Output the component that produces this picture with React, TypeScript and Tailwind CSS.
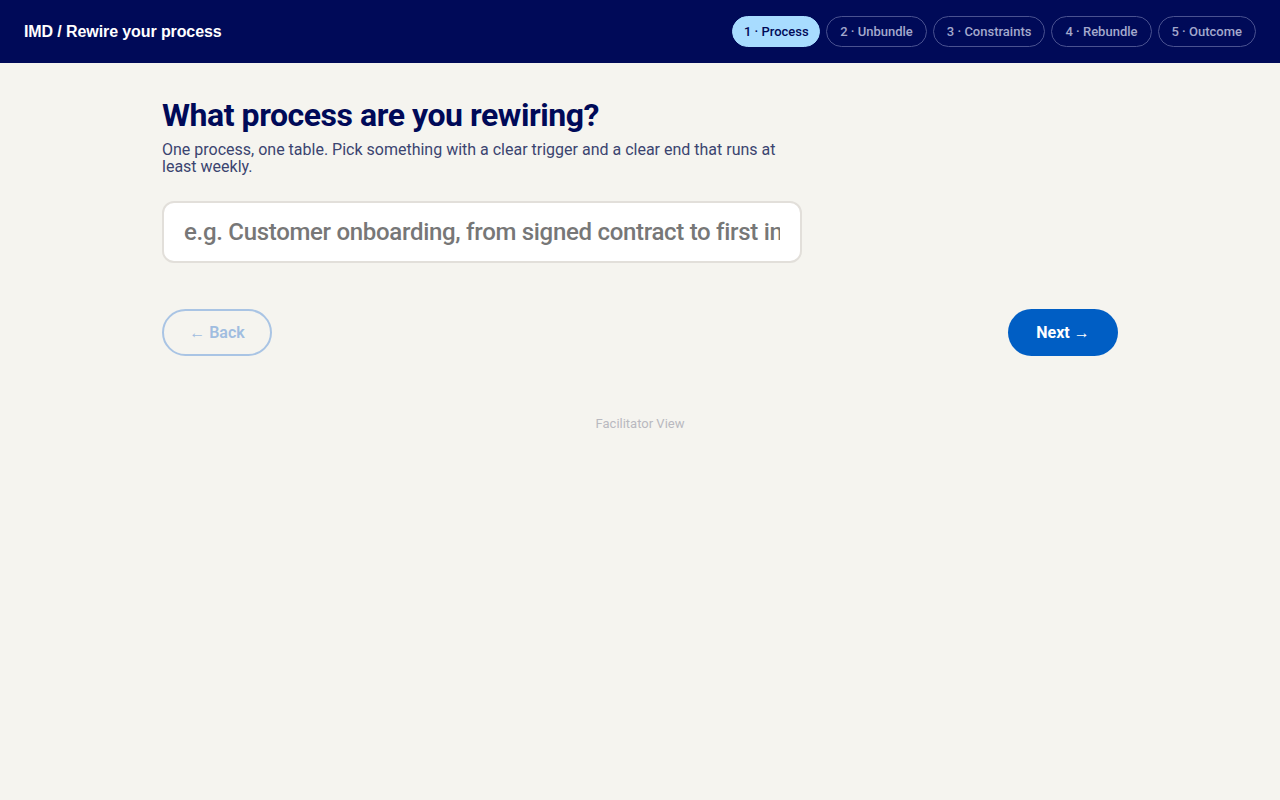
const steps = ["1 · Process", "2 · Unbundle", "3 · Constraints", "4 · Rebundle", "5 · Outcome"]

const App = () => {
  const active = 0

  return (
    <div className="min-h-screen bg-[#f5f4ef] font-['Roboto',sans-serif]">
      <header className="h-[63px] bg-[#000a58] flex items-center justify-between pl-6 pr-6">
        <h1 className="text-white text-base font-bold font-['Liberation_Sans',sans-serif] tracking-[-0.1px]">
          IMD / Rewire your process
        </h1>
        <nav className="flex items-center gap-1.5">
          {steps.map((s, i) => (
            <span
              key={s}
              className={
                i === active
                  ? "h-[31px] px-[10.5px] flex items-center rounded-full border border-[#a8dcff] bg-[#a8dcff] text-[#000a58] text-[13px] font-medium"
                  : "h-[31px] px-[13px] flex items-center rounded-full border border-[#4a5290] text-[#a3a8cc] text-[13px] font-medium"
              }
            >
              {s}
            </span>
          ))}
        </nav>
      </header>

      <main className="max-w-[956px] mx-auto pt-[32px]">
        <h2 className="text-[32px] leading-[40px] font-bold text-[#000a58] tracking-[-0.45px]">
          What process are you rewiring?
        </h2>
        <p className="mt-[6px] max-w-[640px] text-base leading-[17px] text-[#3b4470]">
          One process, one table. Pick something with a clear trigger and a clear end that runs at least weekly.
        </p>
        <input
          type="text"
          placeholder="e.g. Customer onboarding, from signed contract to first invoice"
          className="mt-[26px] w-[640px] h-[62px] rounded-xl border-2 border-[#e2dfda] bg-white px-5 text-[24px] font-medium text-[#222] placeholder:text-[#777777] outline-none tracking-[-0.3px]"
        />

        <div className="mt-[46px] flex items-center justify-between">
          <button className="w-[110px] h-[47px] rounded-full border-2 border-[#a9c4e4] text-[#a0bde0] text-base font-semibold">
            ← Back
          </button>
          <button className="w-[110px] h-[47px] rounded-full bg-[#005ec4] text-white text-base font-bold">
            Next →
          </button>
        </div>

        <p className="mt-[58px] text-center text-[13px] text-[#b9b9c0]">Facilitator View</p>
      </main>
    </div>
  )
}

export default App
